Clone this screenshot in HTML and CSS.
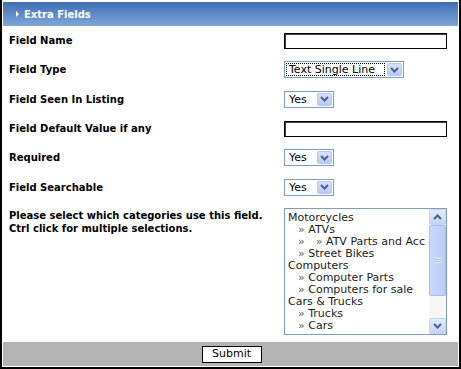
FILE: index.html
```html
<!DOCTYPE html>
<html>
<head>
<meta charset="utf-8">
<link rel="stylesheet" href="styles.css">
</head>
<body>
<div class="panel">
  <div class="header"><span class="tri"></span>Extra Fields</div>
  <div class="form">
    <div class="label">Field Name</div>
    <div class="ctl"><div class="textbox"></div></div>

    <div class="label">Field Type</div>
    <div class="ctl"><div class="select wide"><span class="val focus">Text Single Line</span><span class="btn"><svg width="9" height="6" viewBox="0 0 9 6"><path d="M1 1 L4.5 4.5 L8 1" fill="none" stroke="#4d6185" stroke-width="2"/></svg></span></div></div>

    <div class="label">Field Seen In Listing</div>
    <div class="ctl"><div class="select"><span class="val">Yes</span><span class="btn"><svg width="9" height="6" viewBox="0 0 9 6"><path d="M1 1 L4.5 4.5 L8 1" fill="none" stroke="#4d6185" stroke-width="2"/></svg></span></div></div>

    <div class="label">Field Default Value if any</div>
    <div class="ctl"><div class="textbox"></div></div>

    <div class="label">Required</div>
    <div class="ctl"><div class="select"><span class="val">Yes</span><span class="btn"><svg width="9" height="6" viewBox="0 0 9 6"><path d="M1 1 L4.5 4.5 L8 1" fill="none" stroke="#4d6185" stroke-width="2"/></svg></span></div></div>

    <div class="label">Field Searchable</div>
    <div class="ctl"><div class="select"><span class="val">Yes</span><span class="btn"><svg width="9" height="6" viewBox="0 0 9 6"><path d="M1 1 L4.5 4.5 L8 1" fill="none" stroke="#4d6185" stroke-width="2"/></svg></span></div></div>

    <div class="label top">Please select which categories use this field.<br>Ctrl click for multiple selections.</div>
    <div class="ctl top">
      <div class="listbox">
        <div class="items">
          <div>Motorcycles</div>
          <div class="ind"><span class="q">»</span> ATVs</div>
          <div class="ind"><span class="q">»</span><span class="gap"></span><span class="q">»</span> ATV Parts and Acc</div>
          <div class="ind"><span class="q">»</span> Street Bikes</div>
          <div>Computers</div>
          <div class="ind"><span class="q">»</span> Computer Parts</div>
          <div class="ind"><span class="q">»</span> Computers for sale</div>
          <div>Cars &amp; Trucks</div>
          <div class="ind"><span class="q">»</span> Trucks</div>
          <div class="ind"><span class="q">»</span> Cars</div>
        </div>
        <div class="scroll">
          <div class="sbtn"><svg width="9" height="6" viewBox="0 0 9 6"><path d="M1 5 L4.5 1.5 L8 5" fill="none" stroke="#4d6185" stroke-width="2"/></svg></div>
          <div class="thumb"><span class="grip"></span></div>
          <div class="track"></div>
          <div class="sbtn"><svg width="9" height="6" viewBox="0 0 9 6"><path d="M1 1 L4.5 4.5 L8 1" fill="none" stroke="#4d6185" stroke-width="2"/></svg></div>
        </div>
      </div>
    </div>
  </div>
  <div class="footer"><button class="submit">Submit</button></div>
</div>
</body>
</html>
```

FILE: styles.css
```css
html, body {
  margin: 0;
  padding: 0;
  background: #fff;
}
body {
  font-family: "DejaVu Sans", Verdana, sans-serif;
  font-size: 11px;
  color: #000;
}
.panel {
  width: 461px;
  height: 369px;
  box-sizing: border-box;
  border: 2px solid #000;
  border-top: 0;
  padding: 2px 1px 1px 1px;
  display: flex;
  flex-direction: column;
}
.header {
  height: 24px;
  background: linear-gradient(#3d6db3, #80a7d9);
  color: #fff;
  font-weight: bold;
  font-size: 10px;
  display: flex;
  align-items: center;
  padding-left: 13px;
  box-sizing: border-box;
}
.tri {
  width: 0;
  height: 0;
  border-left: 3px solid #fff;
  border-top: 3px solid transparent;
  border-bottom: 3px solid transparent;
  margin-right: 5px;
}
.form {
  flex: 1;
  display: grid;
  grid-template-columns: 275px 1fr;
  grid-template-rows: 29px 29px 30px 29px 29px 30px 1fr;
  padding-left: 6px;
}
.label {
  font-weight: bold;
  font-size: 10px;
  display: flex;
  align-items: center;
  line-height: 13px;
}
.ctl {
  display: flex;
  align-items: center;
}
.label.top, .ctl.top {
  align-items: flex-start;
  padding-top: 6px;
}
.label.top { display: block; padding-top: 7px; }
.textbox {
  width: 163px;
  height: 16px;
  box-sizing: border-box;
  border: 1px solid #000;
  box-shadow: inset 1px 1px 0 #404040;
  background: #fff;
}
.select {
  width: 50px;
  height: 17px;
  box-sizing: border-box;
  border: 1px solid #7f9db9;
  background: #fff;
  display: flex;
  align-items: center;
  justify-content: space-between;
  padding: 1px;
}
.select.wide { width: 120px; }
.val {
  padding: 0 2px 0 3px;
  line-height: 13px;
  height: 13px;
}
.val.focus {
  outline: 1px dotted #000;
  outline-offset: -1px;
  padding: 0 3px 0 3px;
  margin-right: 2px;
  flex: 1;
}
.btn {
  width: 15px;
  height: 13px;
  box-sizing: border-box;
  background: linear-gradient(#d6e1fd, #b5c8f6);
  border: 1px solid #b6c8f3;
  border-radius: 2px;
  display: flex;
  align-items: center;
  justify-content: center;
}
.listbox {
  width: 163px;
  height: 127px;
  box-sizing: border-box;
  border: 1px solid #7f9db9;
  display: flex;
  background: #fff;
}
.items {
  flex: 1;
  overflow: hidden;
  white-space: nowrap;
  line-height: 12px;
  padding: 3px 0 0 3px;
  color: #1a1a1a;
}
.ind { padding-left: 10px; }
.q { color: #5a5a5a; }
.gap { display: inline-block; width: 11px; }
.scroll {
  width: 17px;
  display: flex;
  flex-direction: column;
  background: #f6f6f3;
}
.sbtn {
  height: 16px;
  box-sizing: border-box;
  border: 1px solid #c3d3fd;
  background: linear-gradient(#e2eafe, #c2d3fb);
  border-radius: 2px;
  display: flex;
  align-items: center;
  justify-content: center;
}
.thumb {
  height: 71px;
  box-sizing: border-box;
  border: 1px solid #a9bde8;
  border-radius: 2px;
  background: linear-gradient(90deg, #c9d8fc, #bccdf8);
  display: flex;
  align-items: center;
  justify-content: center;
}
.grip {
  width: 6px;
  height: 5px;
  background: repeating-linear-gradient(#eef3ff 0 1px, #9db4e8 1px 2px);
}
.track { flex: 1; }
.footer {
  height: 24px;
  background: #b4b4b4;
  display: flex;
  align-items: center;
  justify-content: center;
}
.submit {
  width: 60px;
  height: 17px;
  box-sizing: border-box;
  border: 1px solid #000;
  background: #fff;
  font-family: "DejaVu Sans", Verdana, sans-serif;
  font-size: 11px;
  color: #000;
  padding: 0;
  margin-left: 2px;
  line-height: 14px;
}
```
